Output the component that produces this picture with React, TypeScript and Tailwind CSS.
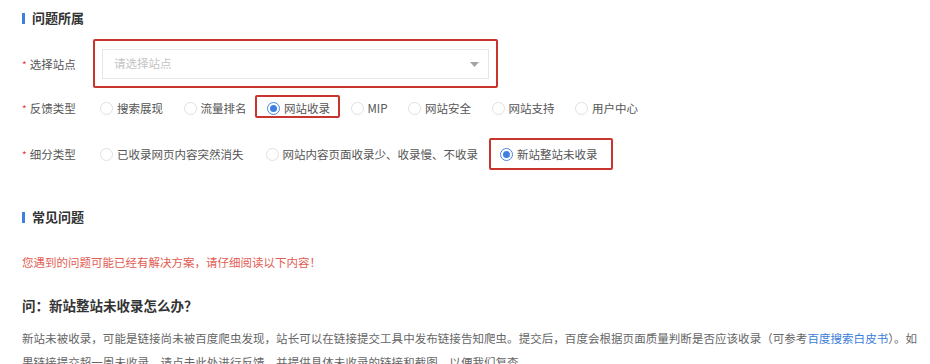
import React from 'react'

function SectionTitle({ text }: { text: string }) {
  return (
    <div className="flex items-center gap-[7px] h-[20px]">
      <span className="w-[3px] h-[11px] bg-[#3e7fe0]" />
      <span className="text-[13px] font-bold text-[#333] leading-[20px]">{text}</span>
    </div>
  )
}

function Radio({ label, checked, boxed }: { label: string; checked?: boolean; boxed?: 'sm' | 'lg' }) {
  return (
    <label className="relative flex items-center gap-[4px] h-[20px]">
      {checked ? (
        <span className="w-[13px] h-[13px] rounded-full border border-[#4a86e0] flex items-center justify-center">
          <span className="w-[7px] h-[7px] rounded-full bg-[#3e7fe0]" />
        </span>
      ) : (
        <span className="w-[13px] h-[13px] rounded-full border border-[#e0e0e0]" />
      )}
      <span className="text-[11.5px] text-[#555] leading-[20px]">{label}</span>
      {boxed === 'sm' && (
        <span className="absolute -left-[12px] -right-[10px] -top-[3px] bottom-0 border-2 border-[#c7352e] rounded-[2px]" />
      )}
      {boxed === 'lg' && (
        <span className="absolute -left-[11px] -right-[15px] -top-[6px] -bottom-[6px] border-2 border-[#c7352e] rounded-[2px]" />
      )}
    </label>
  )
}

function Label({ text }: { text: string }) {
  return (
    <div className="w-[78px] shrink-0 flex items-center gap-[3px] h-[20px]">
      <span className="text-[10px] text-[#e4393c] leading-[20px] pt-[2px]">*</span>
      <span className="text-[11.5px] text-[#555] leading-[20px]">{text}</span>
    </div>
  )
}

export default function App() {
  return (
    <div className="min-h-screen bg-white pl-[22px] pt-[8px] font-['Noto_Sans_CJK_SC',sans-serif]">
      <SectionTitle text="问题所属" />

      <div className="flex items-center mt-[21px]">
        <Label text="选择站点" />
        <div className="relative ml-[2px]">
          <div className="w-[387px] h-[30px] border border-[#e6e6e6] bg-white flex items-center justify-between pl-[11px] pr-[9px]">
            <span className="text-[11.5px] text-[#c4c4c4]">请选择站点</span>
            <svg width="9" height="5" viewBox="0 0 9 5">
              <path d="M0 0 L9 0 L4.5 5 Z" fill="#a3a3a3" />
            </svg>
          </div>
          <span className="absolute -left-[9px] -right-[9px] -top-[10px] -bottom-[9px] border-2 border-[#c7352e] rounded-[2px]" />
        </div>
      </div>

      <div className="flex items-center mt-[19px]">
        <Label text="反馈类型" />
        <div className="flex items-center gap-[20.5px]">
          <Radio label="搜索展现" />
          <Radio label="流量排名" />
          <Radio label="网站收录" checked boxed="sm" />
          <Radio label="MIP" />
          <Radio label="网站安全" />
          <Radio label="网站支持" />
          <Radio label="用户中心" />
        </div>
      </div>

      <div className="flex items-center mt-[26px]">
        <Label text="细分类型" />
        <div className="flex items-center gap-[22px]">
          <Radio label="已收录网页内容突然消失" />
          <Radio label="网站内容页面收录少、收录慢、不收录" />
          <Radio label="新站整站未收录" checked boxed="lg" />
        </div>
      </div>

      <div className="mt-[43px]">
        <SectionTitle text="常见问题" />
      </div>

      <p className="mt-[25px] text-[11.5px] leading-[20px] text-[#e25c54]">
        您遇到的问题可能已经有解决方案，请仔细阅读以下内容！
      </p>

      <h3 className="mt-[22px] text-[13.5px] font-bold leading-[22px] text-[#333]">问：新站整站未收录怎么办？</h3>

      <p className="mt-[10px] text-[11.5px] leading-[24px] tracking-[0.05px] text-[#666]">
        <span className="block whitespace-nowrap">
          新站未被收录，可能是链接尚未被百度爬虫发现，站长可以在链接提交工具中发布链接告知爬虫。提交后，百度会根据页面质量判断是否应该收录（可参考
          <span className="text-[#3b7ddb]">百度搜索白皮书</span>
          ）。如
        </span>
        <span className="block whitespace-nowrap">果链接提交超一周未收录，请点击此处进行反馈，并提供具体未收录的链接和截图，以便我们复查。</span>
      </p>
    </div>
  )
}
